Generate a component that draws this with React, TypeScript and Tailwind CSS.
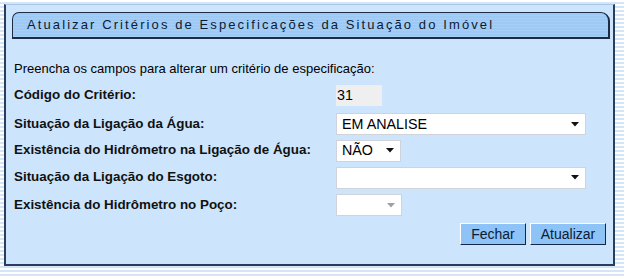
import React from 'react';

const FONT = { fontFamily: '"Liberation Sans", Arial, sans-serif' };

function Caret({ muted = false }: { muted?: boolean }) {
  return (
    <svg width="8" height="5" viewBox="0 0 8 5" className="shrink-0">
      <path d="M0 0h8L4 4.5z" fill={muted ? '#a0a0a0' : '#111'} />
    </svg>
  );
}

function Select({ value, width, disabled = false }: { value: string; width: string; disabled?: boolean }) {
  return (
    <div
      className={`${width} flex h-[22px] items-center justify-between border border-[#d0d4da] bg-white pl-[5px] pr-[6px] text-[14.3px] leading-none text-black ${
        disabled ? 'border-[#b8bcc2]' : ''
      }`}
    >
      <span>{value}</span>
      <Caret muted={disabled} />
    </div>
  );
}

const ROWS: { label: string; field: React.ReactNode; h: string }[] = [
  {
    label: 'Código do Critério:',
    h: 'h-[30px]',
    field: <div className="flex h-[21px] w-[46px] items-center bg-[#efefef] pl-[1px] text-[14.3px] text-black">31</div>,
  },
  { label: 'Situação da Ligação da Água:', h: 'h-[27px]', field: <Select value="EM ANALISE" width="w-[250px]" /> },
  { label: 'Existência do Hidrômetro na Ligação de Água:', h: 'h-[26px]', field: <Select value="NÃO" width="w-[65px]" /> },
  { label: 'Situação da Ligação do Esgoto:', h: 'h-[28px]', field: <Select value="" width="w-[250px]" /> },
  { label: 'Existência do Hidrômetro no Poço:', h: 'h-[27px]', field: <Select value="" width="w-[66px]" disabled /> },
];

export default function App() {
  return (
    <div
      className="h-[278px] w-[624px] overflow-hidden bg-[repeating-linear-gradient(to_bottom,#ffffff_0px,#ffffff_2px,#d3e5f6_2px,#d3e5f6_4px)] pl-[4px] pt-[4px]"
      style={FONT}
    >
      <div className="flex h-[262px] w-[611px] flex-col border-t border-r-2 border-b-2 border-l-2 border-t-[#a9c6e6] border-r-[#2b3d5c] border-b-[#2b3d5c] border-l-[#2b3d5c] bg-[#cce5fd] px-[6px] pt-[7px]">
        <div className="flex h-[27px] w-[598px] items-center rounded-tl-[7px] rounded-tr-[9px] border border-r-2 border-b-2 border-[#1d2b45] bg-[repeating-linear-gradient(to_bottom,#9ec9f4_0px,#9ec9f4_2px,#a6cff7_2px,#a6cff7_3px)] pl-[14px] text-[13px] tracking-[2.1px] text-[#0b1b33]">
          Atualizar Critérios de Especificações da Situação do Imóvel
        </div>
        <div className="pl-[2px] pt-[20px] text-[13px] text-black">
          Preencha os campos para alterar um critério de especificação:
        </div>
        <div className="mt-[2px] flex flex-col pl-[2px]">
          {ROWS.map((r) => (
            <div key={r.label} className={`flex items-center ${r.h}`}>
              <div className="w-[322px] text-[13.4px] font-bold text-[#111]">{r.label}</div>
              {r.field}
            </div>
          ))}
        </div>
        <div className="mt-[4px] flex justify-end gap-[4px] pr-[1px]">
          <button className="h-[22px] w-[66px] border border-t-white border-l-white border-r-[#14264a] border-b-[#14264a] bg-[#8ec3f8] text-[14px] text-[#0b1b33]">
            Fechar
          </button>
          <button className="h-[22px] w-[76px] border border-t-white border-l-white border-r-[#14264a] border-b-[#14264a] bg-[#8ec3f8] text-[14px] text-[#0b1b33]">
            Atualizar
          </button>
        </div>
      </div>
    </div>
  );
}
